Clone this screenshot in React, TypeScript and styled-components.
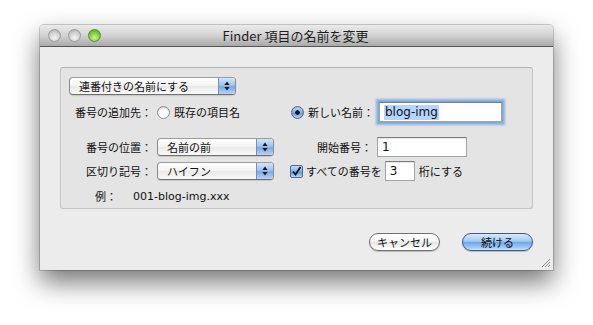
import React from "react";
import styled, { createGlobalStyle } from "styled-components";

const Global = createGlobalStyle`
  html, body { margin: 0; padding: 0; background: #ffffff; }
  body { font-family: "Noto Sans CJK JP", "Noto Sans", sans-serif; -webkit-font-smoothing: antialiased; }
`;

const Page = styled.div`
  width: 593px;
  height: 325px;
  padding: 25px 0 0 40px;
  box-sizing: border-box;
`;

const Window = styled.div`
  width: 513px;
  height: 245px;
  background: #ececec;
  border-radius: 4px 4px 0 0;
  box-shadow: 0 12px 26px rgba(0, 0, 0, 0.55), 0 0 0 1px rgba(0, 0, 0, 0.18);
  display: flex;
  flex-direction: column;
`;

const TitleBar = styled.div`
  height: 22px;
  flex: none;
  box-sizing: border-box;
  background: linear-gradient(#ebebeb, #d2d2d2 50%, #a9a9a9);
  border-bottom: 1px solid #555;
  border-radius: 4px 4px 0 0;
  display: flex;
  align-items: center;
  padding-left: 8px;
  position: relative;
`;

const Lights = styled.div`
  display: flex;
  gap: 7px;
`;

const Light = styled.span<{ $green?: boolean }>`
  width: 13px;
  height: 13px;
  border-radius: 50%;
  box-sizing: border-box;
  border: 1px solid ${(p) => (p.$green ? "#5c8a30" : "#9a9a9a")};
  background: ${(p) =>
    p.$green
      ? "radial-gradient(circle at 50% 70%, #c9f58a 0%, #8fd24a 45%, #4f9a1d 100%)"
      : "radial-gradient(circle at 50% 70%, #f4f4f4 0%, #d3d3d3 50%, #a8a8a8 100%)"};
`;

const Title = styled.div`
  position: absolute;
  left: 0;
  right: 0;
  top: 0;
  bottom: 0;
  display: flex;
  align-items: center;
  justify-content: center;
  font-size: 13px;
  color: #1e1e1e;
  pointer-events: none;
  padding-right: 2px;
`;

const Body = styled.div`
  flex: 1;
  padding: 20px 20px 0 20px;
  display: flex;
  flex-direction: column;
  position: relative;
`;

const Group = styled.div`
  height: 142px;
  box-sizing: border-box;
  border: 1px solid #c4c4c4;
  border-top-color: #b4b4b4;
  border-radius: 3px;
  background: #e4e4e4;
  padding: 9px 0 0 8px;
  display: flex;
  flex-direction: column;
`;

const Row = styled.div<{ $mt?: number; $h?: number }>`
  display: flex;
  align-items: center;
  height: ${(p) => p.$h ?? 20}px;
  margin-top: ${(p) => p.$mt ?? 0}px;
  font-size: 11px;
  color: #111;
  white-space: nowrap;
`;

const Label = styled.div<{ $w: number; $pad?: number }>`
  width: ${(p) => p.$w}px;
  flex: none;
  text-align: right;
  padding-right: ${(p) => p.$pad ?? 5}px;
  box-sizing: border-box;
`;

const Text = styled.span<{ $ml?: number }>`
  margin-left: ${(p) => p.$ml ?? 0}px;
`;

const Cell = styled.div<{ $w: number }>`
  width: ${(p) => p.$w}px;
  flex: none;
  display: flex;
  align-items: center;
`;

const PopupBox = styled.div<{ $w: number }>`
  width: ${(p) => p.$w}px;
  height: 18px;
  flex: none;
  box-sizing: border-box;
  border: 1px solid #8c8c8c;
  border-top-color: #9c9c9c;
  border-bottom-color: #6e6e6e;
  border-radius: 4px;
  background: linear-gradient(#ffffff, #f3f3f3 50%, #e8e8e8 51%, #fafafa);
  display: flex;
  align-items: stretch;
  overflow: hidden;
  box-shadow: 0 1px 1px rgba(0, 0, 0, 0.12);
`;

const PopupText = styled.div`
  flex: 1;
  display: flex;
  align-items: center;
  padding-left: 9px;
  font-size: 11px;
  color: #111;
`;

const Arrows = styled.div`
  width: 16px;
  flex: none;
  border-left: 1px solid #7d8fa8;
  background: linear-gradient(#d3e5fa, #9fc3ef 45%, #79a9e6 55%, #b8d6f7);
  display: flex;
  align-items: center;
  justify-content: center;
`;

const Popup: React.FC<{ w: number; children: React.ReactNode }> = ({ w, children }) => (
  <PopupBox $w={w}>
    <PopupText>{children}</PopupText>
    <Arrows>
      <svg width="6" height="10" viewBox="0 0 6 10">
        <path d="M3 0.5 L5.6 4 L0.4 4 Z" fill="#1a1a1a" />
        <path d="M3 9.5 L5.6 6 L0.4 6 Z" fill="#1a1a1a" />
      </svg>
    </Arrows>
  </PopupBox>
);

const Radio = styled.span<{ $on?: boolean }>`
  width: 13px;
  height: 13px;
  flex: none;
  border-radius: 50%;
  box-sizing: border-box;
  border: 1px solid ${(p) => (p.$on ? "#4b6a91" : "#8a8a8a")};
  background: ${(p) =>
    p.$on
      ? "radial-gradient(circle, #111 0 2px, transparent 2.5px), linear-gradient(#c6dcf6, #7fb0ea 50%, #5d9ae3 55%, #b6d5f7)"
      : "linear-gradient(#f4f4f4, #ffffff 60%, #ffffff)"};
  box-shadow: inset 0 1px 1px rgba(0, 0, 0, 0.15);
`;

const Check = styled.span`
  width: 13px;
  height: 13px;
  flex: none;
  box-sizing: border-box;
  border: 1px solid #4b6a91;
  border-radius: 2px;
  background: linear-gradient(#c6dcf6, #7fb0ea 50%, #5d9ae3 55%, #b6d5f7);
  display: flex;
  align-items: center;
  justify-content: center;
`;

const Field = styled.div<{ $w: number; $focus?: boolean }>`
  width: ${(p) => p.$w}px;
  height: 20px;
  flex: none;
  box-sizing: border-box;
  background: #fff;
  border: 1px solid #a3a3a3;
  border-top-color: #7c7c7c;
  box-shadow: ${(p) =>
    p.$focus
      ? "0 0 0 1px #7ea7d8, 0 0 2px 3px rgba(110, 160, 225, 0.75)"
      : "inset 0 1px 1px rgba(0,0,0,0.1)"};
  display: flex;
  align-items: center;
  padding-left: 4px;
  font-size: 12px;
  color: #111;
  font-family: "DejaVu Sans", "Noto Sans CJK JP", sans-serif;
`;

const Selected = styled.span`
  background: #b5d5ff;
  line-height: 15px;
  padding: 0 1px;
`;

const Example = styled.span`
  margin-left: 16px;
  font-size: 11px;
  font-family: "DejaVu Sans", "Noto Sans CJK JP", sans-serif;
  color: #111;
`;

const ButtonRow = styled.div`
  display: flex;
  justify-content: flex-end;
  gap: 22px;
  margin-top: 24px;
`;

const Button = styled.div<{ $primary?: boolean }>`
  width: 71px;
  height: 18px;
  box-sizing: border-box;
  border-radius: 9px;
  border: 1px solid ${(p) => (p.$primary ? "#3c5a86" : "#6f6f6f")};
  background: ${(p) =>
    p.$primary
      ? "linear-gradient(#d9e9fb, #a5c9f3 45%, #6ea6e8 52%, #9ccbf8 85%, #c9e6ff)"
      : "linear-gradient(#ffffff, #f6f6f6 45%, #e6e6e6 52%, #f7f7f7 85%, #ffffff)"};
  box-shadow: 0 1px 1px rgba(0, 0, 0, 0.2);
  display: flex;
  align-items: center;
  justify-content: center;
  font-size: 11px;
  color: #111;
`;

const Grip = styled.svg`
  position: absolute;
  right: 2px;
  bottom: 2px;
`;

export default function App() {
  return (
    <>
      <Global />
      <Page>
        <Window>
          <TitleBar>
            <Lights>
              <Light />
              <Light />
              <Light $green />
            </Lights>
            <Title>Finder 項目の名前を変更</Title>
          </TitleBar>
          <Body>
            <Group>
              <Row $h={18}>
                <Popup w={167}>連番付きの名前にする</Popup>
              </Row>
              <Row $mt={7}>
                <Label $w={88}>番号の追加先：</Label>
                <Cell $w={134}>
                  <Radio />
                  <Text $ml={4}>既存の項目名</Text>
                </Cell>
                <Radio $on />
                <Text $ml={4}>新しい名前：</Text>
                <Text $ml={5}>
                  <Field $w={123} $focus>
                    <Selected>blog-img</Selected>
                  </Field>
                </Text>
              </Row>
              <Row $mt={15}>
                <Label $w={88}>番号の位置：</Label>
                <Popup w={117}>名前の前</Popup>
                <Label $w={103}>開始番号：</Label>
                <Field $w={90}>1</Field>
              </Row>
              <Row $mt={4}>
                <Label $w={88}>区切り記号：</Label>
                <Popup w={117}>ハイフン</Popup>
                <Text $ml={16} />
                <Check>
                  <svg width="11" height="11" viewBox="0 0 11 11">
                    <path d="M2 5.5 L4.5 8.5 L9.5 1" stroke="#111" strokeWidth="1.8" fill="none" />
                  </svg>
                </Check>
                <Text $ml={3}>すべての番号を</Text>
                <Text $ml={3}>
                  <Field $w={30}>3</Field>
                </Text>
                <Text $ml={4}>桁にする</Text>
              </Row>
              <Row $mt={5}>
                <Text $ml={26}>例：</Text>
                <Example>001-blog-img.xxx</Example>
              </Row>
            </Group>
            <ButtonRow>
              <Button>キャンセル</Button>
              <Button $primary>続ける</Button>
            </ButtonRow>
            <Grip width="11" height="11" viewBox="0 0 11 11">
              <path d="M10 2 L2 10 M10 5 L5 10 M10 8 L8 10" stroke="#8a8a8a" strokeWidth="1" />
            </Grip>
          </Body>
        </Window>
      </Page>
    </>
  );
}
